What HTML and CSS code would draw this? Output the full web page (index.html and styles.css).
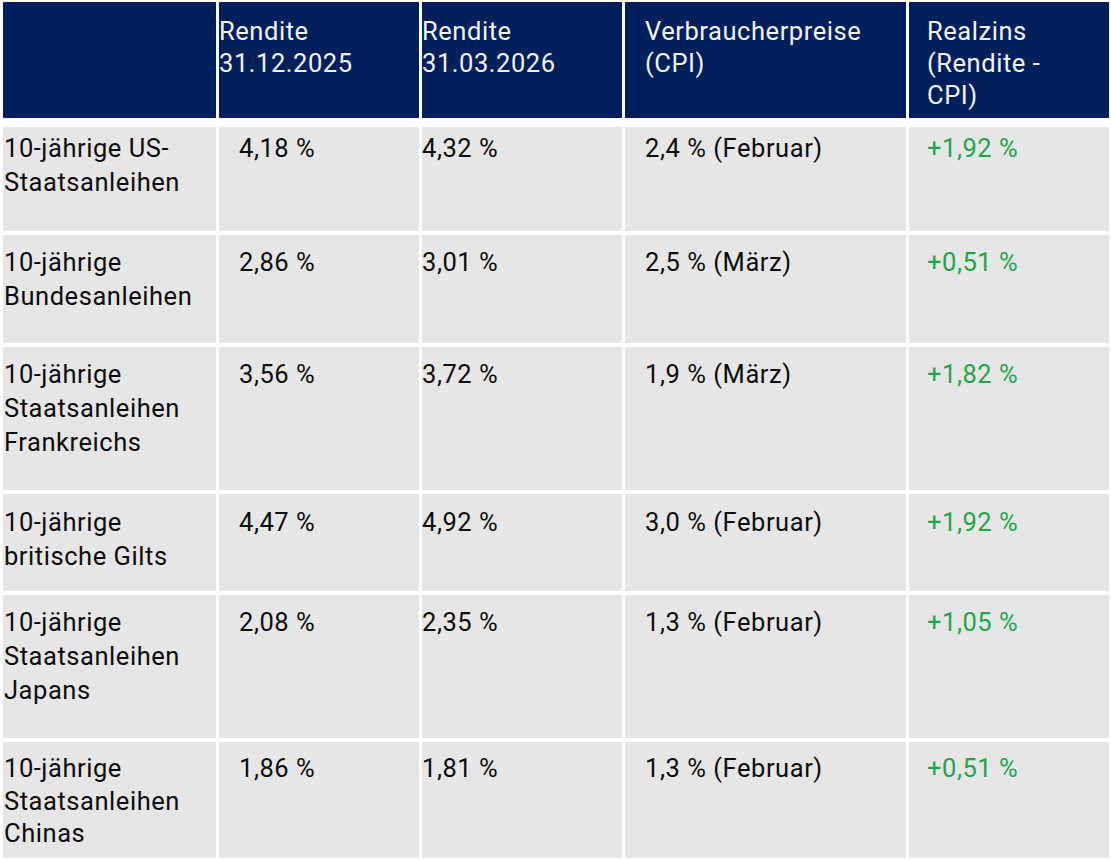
FILE: index.html
```html
<!DOCTYPE html>
<html lang="de">
<head>
<meta charset="utf-8">
<title>Renditen und Realzinsen</title>
<link rel="stylesheet" href="styles.css">
</head>
<body>
<div class="table">
  <div class="row head">
    <div class="cell c1"></div>
    <div class="cell c2">Rendite<br>31.12.2025</div>
    <div class="cell c3">Rendite<br>31.03.2026</div>
    <div class="cell c4">Verbraucherpreise<br>(CPI)</div>
    <div class="cell c5">Realzins<br>(Rendite -<br>CPI)</div>
  </div>
  <div class="body">
    <div class="row r1">
      <div class="cell c1">10-jährige US-<br>Staatsanleihen</div>
      <div class="cell c2">4,18 %</div>
      <div class="cell c3">4,32 %</div>
      <div class="cell c4">2,4 % (Februar)</div>
      <div class="cell c5 pos">+1,92 %</div>
    </div>
    <div class="row r2">
      <div class="cell c1">10-jährige<br>Bundesanleihen</div>
      <div class="cell c2">2,86 %</div>
      <div class="cell c3">3,01 %</div>
      <div class="cell c4">2,5 % (März)</div>
      <div class="cell c5 pos">+0,51 %</div>
    </div>
    <div class="row r3">
      <div class="cell c1">10-jährige<br>Staatsanleihen<br>Frankreichs</div>
      <div class="cell c2">3,56 %</div>
      <div class="cell c3">3,72 %</div>
      <div class="cell c4">1,9 % (März)</div>
      <div class="cell c5 pos">+1,82 %</div>
    </div>
    <div class="row r4">
      <div class="cell c1">10-jährige<br>britische Gilts</div>
      <div class="cell c2">4,47 %</div>
      <div class="cell c3">4,92 %</div>
      <div class="cell c4">3,0 % (Februar)</div>
      <div class="cell c5 pos">+1,92 %</div>
    </div>
    <div class="row r5">
      <div class="cell c1">10-jährige<br>Staatsanleihen<br>Japans</div>
      <div class="cell c2">2,08 %</div>
      <div class="cell c3">2,35 %</div>
      <div class="cell c4">1,3 % (Februar)</div>
      <div class="cell c5 pos">+1,05 %</div>
    </div>
    <div class="row r6">
      <div class="cell c1">10-jährige<br>Staatsanleihen<br>Chinas</div>
      <div class="cell c2">1,86 %</div>
      <div class="cell c3">1,81 %</div>
      <div class="cell c4">1,3 % (Februar)</div>
      <div class="cell c5 pos">+0,51 %</div>
    </div>
  </div>
</div>
</body>
</html>
```

FILE: styles.css
```css
html, body {
  margin: 0;
  padding: 0;
  background: #ffffff;
}

body {
  font-family: Roboto, "Noto Sans", "Liberation Sans", sans-serif;
  font-size: 25.5px;
  letter-spacing: 0.55px;
  color: #0d0d0d;
}

.table {
  padding: 2px 0 0 3px;
  display: flex;
  flex-direction: column;
  gap: 9px;
}

.row {
  display: grid;
  grid-template-columns: 213px 200px 200px 281px 200px;
  column-gap: 3px;
}

.body {
  display: flex;
  flex-direction: column;
  gap: 4px;
}

.cell {
  background: #e6e6e6;
  line-height: 34px;
  padding-top: 10px;
  box-sizing: border-box;
}

.head {
  height: 116px;
}

.head .cell {
  background: #001f5b;
  color: #f2f4f8;
  line-height: 32px;
  padding-top: 13px;
}

.c1 { padding-left: 1px; }
.c2 { padding-left: 20px; }
.c3 { padding-left: 0; }
.c4 { padding-left: 20px; }
.c5 { padding-left: 18px; }

.head .c2 { padding-left: 0; }

.pos { color: #1fa64b; }

.r1 { height: 104px; }
.r1 .cell { padding-top: 4px; }
.r2 { height: 108px; }
.r3 { height: 143px; }
.r4 { height: 97px; }
.r4 .cell { padding-top: 11px; }
.r5 { height: 143px; }
.r6 { height: 116px; }
.r6 .cell { padding-top: 10px; line-height: 32.5px; }
```
